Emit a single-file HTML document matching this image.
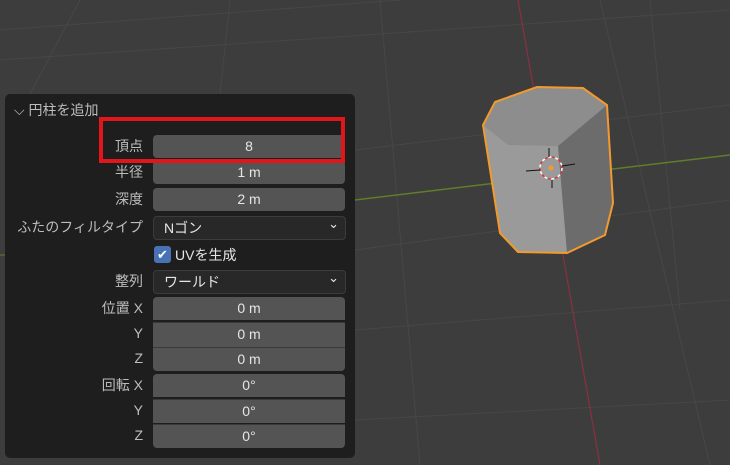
<!DOCTYPE html>
<html><head><meta charset="utf-8"><style>
body{margin:0;width:730px;height:465px;overflow:hidden;background:#3d3d3d;font-family:"Liberation Sans","Noto Sans CJK JP",sans-serif;position:relative}
.p{position:absolute;left:5px;top:94px;width:350px;height:364px;background:#1e1e1e;border-radius:5px}
.l{position:absolute;right:587px;color:#bdbdbd;font-size:14px;line-height:23px;text-align:right;white-space:nowrap}
.f{position:absolute;left:153px;width:192px;height:23px;background:#545454;color:#e6e6e6;font-size:14px;line-height:23px;text-align:center;border-radius:4px}
.d{background:#282828;border:1px solid #3c3c3c;height:22px;text-align:left;padding-left:10px;width:181px;box-sizing:content-box;line-height:22px}
.d:after{content:"⌄";position:absolute;right:6px;top:-4px;font-size:13px}
</style></head><body>
<svg width="730" height="465" style="position:absolute;left:0;top:0">
<g stroke="#474747" stroke-width="1">
<line x1="0" y1="60" x2="730" y2="10"/><line x1="0" y1="30" x2="400" y2="0"/>
<line x1="355" y1="150" x2="730" y2="105"/><line x1="355" y1="250" x2="730" y2="200"/>
<line x1="355" y1="330" x2="730" y2="300"/><line x1="355" y1="420" x2="730" y2="400"/>
<line x1="80" y1="0" x2="30" y2="94"/><line x1="230" y1="0" x2="220" y2="94"/>
<line x1="380" y1="0" x2="420" y2="465"/><line x1="600" y1="0" x2="710" y2="465"/>
<line x1="650" y1="0" x2="680" y2="310"/>
</g>
<line x1="355" y1="200" x2="730" y2="155" stroke="#5f7d2a" stroke-width="1.5"/>
<line x1="0" y1="255" x2="5" y2="255" stroke="#5f7d2a"/>
<line x1="518" y1="0" x2="600" y2="465" stroke="#8a3040" stroke-width="1.2"/>
<polygon points="495,102 537,87 583,88 607,105 613,203 605,235 567,253 518,252 500,233 483,125" fill="#9a9a9a"/>
<polygon points="495,102 537,87 583,88 607,105 558,146 508,145 483,125" fill="#8d8d8d"/>
<polygon points="558,146 607,105 613,203 605,235 567,253" fill="#6c6c6c"/>
<polygon points="495,102 537,87 583,88 607,105 613,203 605,235 567,253 518,252 500,233 483,125" fill="none" stroke="#f29a2e" stroke-width="2"/>
<circle cx="551" cy="168" r="11" fill="none" stroke="#fff" stroke-width="1.5" stroke-dasharray="4 3"/>
<circle cx="551" cy="168" r="11" fill="none" stroke="#d33" stroke-width="1.5" stroke-dasharray="3 4" stroke-dashoffset="4"/>
<g stroke="#111"><line x1="526" y1="171" x2="540" y2="170"/><line x1="562" y1="166" x2="575" y2="164"/><line x1="549" y1="148" x2="549" y2="157"/><line x1="552" y1="180" x2="552" y2="188"/></g>
<circle cx="551" cy="168" r="2.5" fill="#f29a2e"/>
</svg>
<div class="p"></div>
<div style="position:absolute;left:14px;top:100px;color:#bdbdbd;font-size:14px;line-height:20px">⌵ 円柱を追加</div>
<div class="l" style="top:135px">頂点</div><div class="f" style="top:135px">8</div>
<div class="l" style="top:161px">半径</div><div class="f" style="top:161px">1 m</div>
<div class="l" style="top:188px">深度</div><div class="f" style="top:188px">2 m</div>
<div class="l" style="top:216px">ふたのフィルタイプ</div><div class="f d" style="top:216px">Nゴン</div>
<div style="position:absolute;left:154px;top:246px;width:17px;height:17px;background:#4772b3;border-radius:3px;color:#fff;font-size:13px;line-height:17px;text-align:center">✔</div>
<div style="position:absolute;left:175px;top:244px;color:#e6e6e6;font-size:14px;line-height:22px">UVを生成</div>
<div class="l" style="top:270px">整列</div><div class="f d" style="top:270px">ワールド</div>
<div class="l" style="top:297px">位置 X</div><div class="f" style="top:297px;border-radius:4px 4px 0 0">0 m</div>
<div class="l" style="top:322px">Y</div><div class="f" style="top:322px;border-radius:0;border-top:1px solid #3a3a3a;height:24px">0 m</div>
<div class="l" style="top:347px">Z</div><div class="f" style="top:347px;border-radius:0 0 4px 4px;border-top:1px solid #3a3a3a">0 m</div>
<div class="l" style="top:374px">回転 X</div><div class="f" style="top:374px;border-radius:4px 4px 0 0">0°</div>
<div class="l" style="top:399px">Y</div><div class="f" style="top:399px;border-radius:0;border-top:1px solid #3a3a3a">0°</div>
<div class="l" style="top:424px">Z</div><div class="f" style="top:424px;border-radius:0 0 4px 4px;border-top:1px solid #3a3a3a">0°</div>
<div style="position:absolute;left:99px;top:117px;width:238px;height:38px;border:4px solid #e0161b"></div>
</body></html>
